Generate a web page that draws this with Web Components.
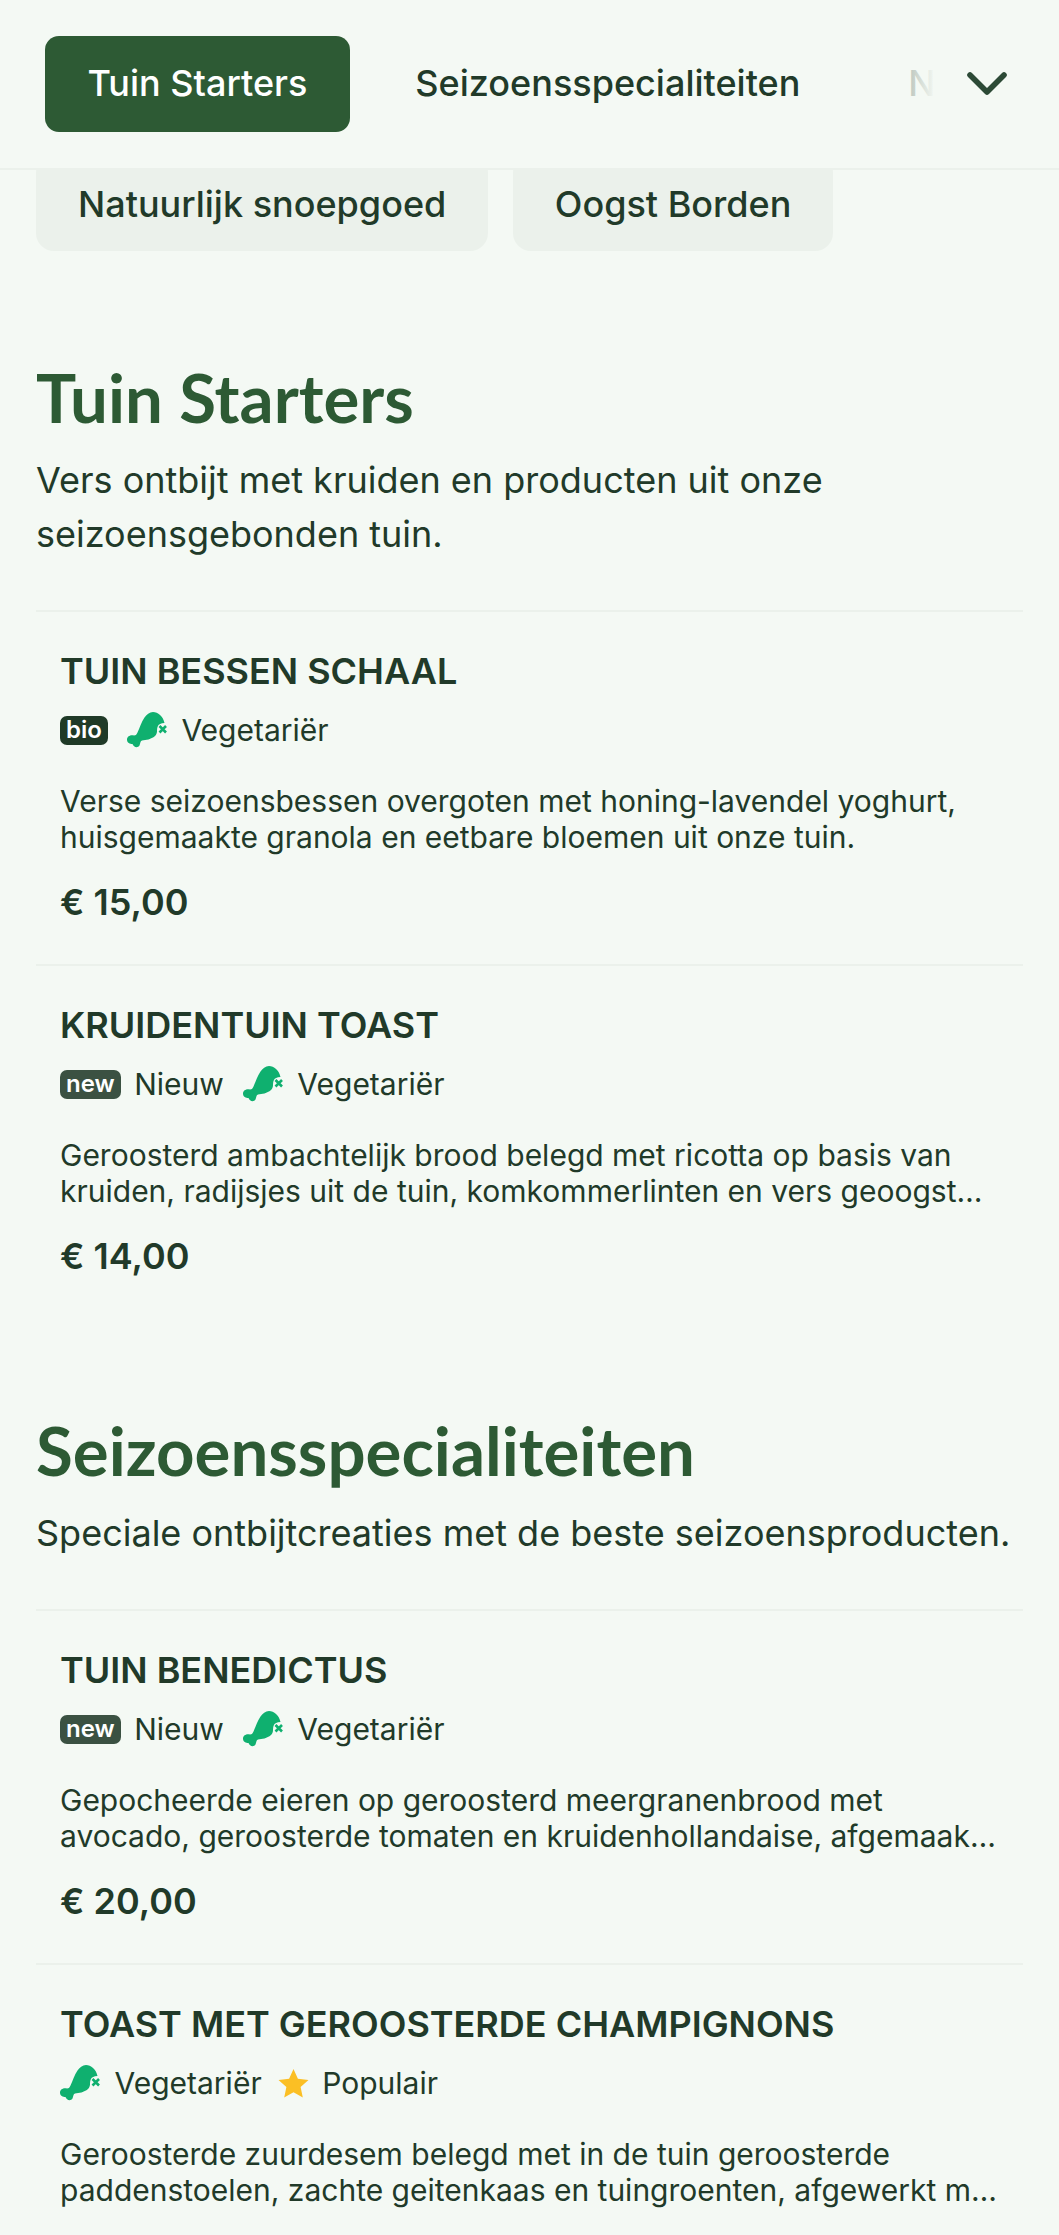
<!DOCTYPE html>
<html lang="nl"><head><meta charset="utf-8"><title>Menu</title>
<style>
html,body{margin:0;padding:0;background:#f4f9f4;height:2235px;overflow:hidden;font-family:Inter,"Liberation Sans",sans-serif;color:#213a29}
</style></head><body>
<tab-bar>
  <tab-link active>Tuin Starters</tab-link>
  <tab-link>Seizoensspecialiteiten</tab-link>
  <tab-link>Natuurlijk snoepgoed</tab-link>
</tab-bar>
<chip-row><menu-chip>Natuurlijk snoepgoed</menu-chip><menu-chip>Oogst Borden</menu-chip></chip-row>
<menu-section heading="Tuin Starters" intro="Vers ontbijt met kruiden en producten uit onze seizoensgebonden tuin.">
  <menu-item name="TUIN BESSEN SCHAAL" price="€ 15,00" desc="Verse seizoensbessen overgoten met honing-lavendel yoghurt, huisgemaakte granola en eetbare bloemen uit onze tuin.">
    <diet-tag kind="bio"></diet-tag><diet-tag kind="veg">Vegetariër</diet-tag>
  </menu-item>
  <menu-item name="KRUIDENTUIN TOAST" price="€ 14,00" desc="Geroosterd ambachtelijk brood belegd met ricotta op basis van kruiden, radijsjes uit de tuin, komkommerlinten en vers geoogst…">
    <diet-tag kind="new">Nieuw</diet-tag><diet-tag kind="veg">Vegetariër</diet-tag>
  </menu-item>
</menu-section>
<menu-section heading="Seizoensspecialiteiten" intro="Speciale ontbijtcreaties met de beste seizoensproducten.">
  <menu-item name="TUIN BENEDICTUS" price="€ 20,00" desc="Gepocheerde eieren op geroosterd meergranenbrood met avocado, geroosterde tomaten en kruidenhollandaise, afgemaak…">
    <diet-tag kind="new">Nieuw</diet-tag><diet-tag kind="veg">Vegetariër</diet-tag>
  </menu-item>
  <menu-item name="TOAST MET GEROOSTERDE CHAMPIGNONS" price="€ 18,00" desc="Geroosterde zuurdesem belegd met in de tuin geroosterde paddenstoelen, zachte geitenkaas en tuingroenten, afgewerkt m…">
    <diet-tag kind="veg">Vegetariër</diet-tag><diet-tag kind="star">Populair</diet-tag>
  </menu-item>
</menu-section>
<script>
function def(name, html){
  customElements.define(name, class extends HTMLElement{
    constructor(){super();this.attachShadow({mode:'open'}).innerHTML=html(this);}
  });
}
const esc=s=>(s||'').replace(/&/g,'&amp;').replace(/"/g,'&quot;');
def('tab-bar',()=>`<style>
:host{display:block;position:relative;height:168px;border-bottom:2px solid #ebf1eb;background:#f4f9f4;overflow:hidden}
.strip{display:flex;gap:23px;padding:36px 0 0 45px;white-space:nowrap}
.more{position:absolute;top:0;right:0;width:193px;height:158px;display:flex;align-items:flex-start;justify-content:flex-end;
background:linear-gradient(90deg,rgba(244,249,244,.3) 0,rgba(244,249,244,.85) 28%,#f4f9f4 36%)}
svg{width:48px;height:30px;margin:68px 48px 0 0}
</style><div class="strip"><slot></slot></div><div class="more"><svg viewBox="0 0 48 30"><path d="M7 7 24 24 41 7" fill="none" stroke="#2c4a36" stroke-width="5.600" stroke-linecap="round" stroke-linejoin="round"/></svg></div>`);
def('tab-link',h=>`<style>
:host{display:block;flex:none;height:96px;line-height:94px;padding:0 42.500px;border-radius:14px;font-size:36px;font-weight:500;color:#213a29;box-sizing:border-box}
:host([active]){background:#2d5a34;color:#fff}
</style><slot></slot>`);
def('chip-row',()=>`<style>
:host{display:flex;gap:24.500px;padding:0 36px;height:81px;overflow:hidden;align-items:flex-end}
</style><slot></slot>`);
def('menu-chip',()=>`<style>
:host{display:block;flex:none;height:96px;line-height:98px;padding:0 42px;border-radius:18px;background:#ebf1eb;font-size:36px;font-weight:500;color:#213a29;box-sizing:border-box}
</style><slot></slot>`);
def('menu-section',h=>`<style>
:host{display:block;padding:108px 36px 0;margin-bottom:-14px}
h2{margin:0;font:700 67.200px/76px Lato,"Liberation Sans",sans-serif;color:#2d5a34}
p{margin:18px 0 49px;font-size:36px;line-height:54px;color:#213a29;font-weight:400}
</style><h2>${esc(h.getAttribute('heading'))}</h2><p>${esc(h.getAttribute('intro'))}</p><slot></slot>`);
def('menu-item',h=>`<style>
:host{display:block;border-top:2px solid #ebf1eb;padding:37px 24px 40px}
h3{margin:0;font-size:36px;line-height:44px;font-weight:600;color:#213a29}
.tags{display:flex;align-items:center;gap:19px;height:44px;margin-top:15px}
p{margin:31px 0 25px;font-size:30px;line-height:36px;color:#213a29}
.price{font-size:36px;line-height:44px;font-weight:600;color:#213a29}
</style><h3>${esc(h.getAttribute('name'))}</h3><div class="tags"><slot></slot></div><p>${esc(h.getAttribute('desc'))}</p><div class="price">${esc(h.getAttribute('price'))}</div>`);
const icons={
 bio:`<span class="b" style="background:#1f3a27">bio</span>`,
 new:`<span class="b" style="background:#3b5142">new</span>`,
 veg:`<svg width="41" height="36" viewBox="0 0 41 36"><path fill="#0fb06f" d="M26 0C31 0 36 4 37.500 11C34 11 31.500 12 30.500 15C29.500 18 31 21 28 24C24 27.500 19 28 15 28.500C13 29.500 13.500 31 12.500 33.500C10.500 36.500 6.500 35 5.500 32C3 32 0 31 0 27.500C0 24 4 22.500 7 23.500C9 23.500 9.500 22.500 10.500 20.500C12.500 16 14.500 10 17.500 5.500C19.500 2.500 22.500 0 26 0Z"/><path d="M32.500 14 39 20.500M39 14 32.500 20.500" stroke="#0fb06f" stroke-width="2.600" fill="none"/></svg>`,
 star:`<svg style="margin-left:-3px" width="31" height="31" viewBox="0 0 24 24"><path fill="#fbbf24" d="M12 .8l3.400 7.500 8.200.9-6.100 5.500 1.700 8.100L12 18.700 4.800 22.800l1.700-8.100L.4 9.200l8.200-.9z"/></svg>`
};
def('diet-tag',h=>`<style>
:host{display:inline-flex;align-items:center;gap:13.500px;font-size:30px;color:#213a29;line-height:44px}
svg{display:block;flex:none}
.b{display:block;height:29px;padding:0 6px;border-radius:7px;color:#fff;font:600 24px/27px Inter,sans-serif}
</style>${icons[h.getAttribute('kind')]}<slot></slot>`);
</script>
</body></html>
